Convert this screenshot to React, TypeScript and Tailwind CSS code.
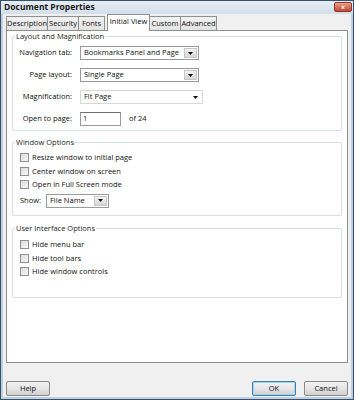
import React from "react";

const font = { fontFamily: '"Open Sans", "Noto Sans", sans-serif' };

function Arrow() {
  return (
    <svg width="5" height="3" viewBox="0 0 5 3">
      <path d="M0 0 H5 L2.5 3 Z" fill="#111" />
    </svg>
  );
}

function Select({ text, w, flat }: { text: string; w: string; flat?: boolean }) {
  if (flat) {
    return (
      <div className={`flex h-[14px] items-center justify-between border border-[#d8d8d8] bg-white pl-[3px] pr-[4px] ${w}`}>
        <span>{text}</span>
        <Arrow />
      </div>
    );
  }
  return (
    <div className={`flex h-[14px] items-stretch border border-[#9a9a9a] bg-white ${w}`}>
      <div className="flex flex-1 items-center pl-[3px]">{text}</div>
      <div className="m-[1px] flex w-[13px] items-center justify-center border border-[#c6c6c6] bg-gradient-to-b from-[#f4f4f4] to-[#d6d6d6]">
        <Arrow />
      </div>
    </div>
  );
}

function Check({ label }: { label: string }) {
  return (
    <div className="flex h-[13.5px] items-center gap-[3px]">
      <div className="h-[9px] w-[9px] border border-[#8f8f8f] bg-gradient-to-br from-[#dcdcdc] to-[#f8f8f8]" />
      <span>{label}</span>
    </div>
  );
}

function Group({ title, children, h }: { title: string; children: React.ReactNode; h: string }) {
  return (
    <div className={`relative rounded-[2px] border border-[#d5dfe5] ${h}`}>
      <div className="absolute left-[2px] top-[-6px] bg-white px-[1px] leading-[10px] text-[#1e1e1e]">{title}</div>
      {children}
    </div>
  );
}

function Btn({ label, primary }: { label: string; primary?: boolean }) {
  return (
    <div
      className={`flex h-[15px] w-[44px] items-center justify-center rounded-[2px] border ${
        primary ? "border-[#3c7fb1] shadow-[inset_0_0_0_1px_#9fd5f3]" : "border-[#8a8a8a]"
      } bg-gradient-to-b from-[#f3f3f3] via-[#e6e6e6] to-[#d0d0d0]`}
    >
      {label}
    </div>
  );
}

export default function App() {
  const tabs = ["Description", "Security", "Fonts", "Initial View", "Custom", "Advanced"];
  const widths = ["w-[42px]", "w-[32px]", "w-[27px]", "w-[43px]", "w-[32px]", "w-[37px]"];
  return (
    <div
      style={font}
      className="flex h-[400px] w-[354px] flex-col overflow-hidden border border-[#3b4f66] bg-[#bcd0e3] text-[7.5px] text-[#111]"
    >
      {/* title bar */}
      <div className="flex h-[13px] items-center justify-between bg-gradient-to-b from-[#e6edf4] to-[#d3dfea] pl-[3px] pr-[1px]">
        <span className="text-[8.5px] font-bold text-[#1a1a1a]">Document Properties</span>
        <div className="mt-[-1px] flex h-[10px] w-[18px] items-center justify-center rounded-[2px] border border-[#8a3a2a] bg-gradient-to-b from-[#e9a08c] to-[#c4462e] text-[7px] font-bold leading-none text-white">
          ×
        </div>
      </div>
      <div className="mx-[2px] mb-[2px] flex flex-1 flex-col bg-[#f0f0f0] px-[3px]">
        {/* tabs */}
        <div className="flex h-[16px] items-end pl-[0px]">
          {tabs.map((t, i) => {
            const sel = i === 3;
            return (
              <div
                key={t}
                className={`flex items-center justify-center border border-b-0 border-[#8e8f8f] ${widths[i]} ${
                  sel
                    ? "relative z-10 mb-[-1px] ml-[2px] h-[17px] bg-white pb-[2px]"
                    : "h-[14px] bg-gradient-to-b from-[#f2f2f2] to-[#e3e3e3]"
                } ${i > 0 && !sel ? "ml-[-1px]" : ""}`}
              >
                {t}
              </div>
            );
          })}
        </div>
        {/* panel */}
        <div className="flex h-[333px] flex-col border border-[#8e8f8f] bg-white px-[5px] pt-[5px]">
          <Group title="Layout and Magnification" h="h-[95px]">
            <div className="flex flex-col gap-[8px] pt-[9px]">
              {[
                ["Navigation tab:", <Select key="a" text="Bookmarks Panel and Page" w="w-[119px]" />],
                ["Page layout:", <Select key="b" text="Single Page" w="w-[119px]" />],
                ["Magnification:", <Select key="c" text="Fit Page" w="w-[123px]" flat />],
                [
                  "Open to page:",
                  <div key="d" className="flex items-center">
                    <div className="flex h-[14px] w-[41px] items-center border border-[#9a9a9a] border-t-[#707070] bg-white pl-[2px]">1</div>
                    <span className="ml-[8px]">of 24</span>
                  </div>,
                ],
              ].map(([label, ctrl], i) => (
                <div key={i} className="flex h-[14px] items-center">
                  <div className="w-[67px] pr-[8px] text-right">{label}</div>
                  {ctrl}
                </div>
              ))}
            </div>
          </Group>
          <div className="h-[11px]" />
          <Group title="Window Options" h="h-[74px]">
            <div className="flex flex-col pl-[7px] pt-[8px]">
              <Check label="Resize window to initial page" />
              <Check label="Center window on screen" />
              <Check label="Open in Full Screen mode" />
              <div className="mt-[2px] flex items-center">
                <span className="w-[26px]">Show:</span>
                <Select text="File Name" w="w-[63px]" />
              </div>
            </div>
          </Group>
          <div className="h-[12px]" />
          <Group title="User Interface Options" h="h-[70px]">
            <div className="flex flex-col pl-[7px] pt-[9px]">
              <Check label="Hide menu bar" />
              <Check label="Hide tool bars" />
              <Check label="Hide window controls" />
            </div>
          </Group>
        </div>
        {/* buttons */}
        <div className="mt-[18px] flex items-center pl-[0px] pr-[0px]">
          <Btn label="Help" />
          <div className="flex-1" />
          <Btn label="OK" primary />
          <div className="w-[8px]" />
          <Btn label="Cancel" />
        </div>
      </div>
    </div>
  );
}
